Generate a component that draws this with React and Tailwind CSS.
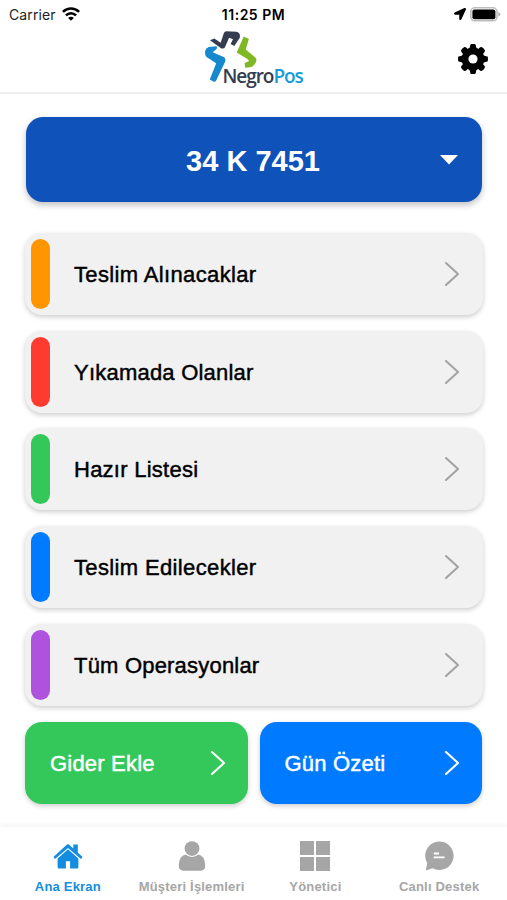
import React from 'react';
import { FaLocationArrow } from 'react-icons/fa';

const operations = [
    { title: 'Teslim Alınacaklar', color: 'bg-[#ff9500]', text: 'tracking-[0.36px]' },
    { title: 'Yıkamada Olanlar', color: 'bg-[#ff3b30]', text: 'tracking-[0.22px]' },
    { title: 'Hazır Listesi', color: 'bg-[#34c759]', text: 'tracking-[0.25px]' },
    { title: 'Teslim Edilecekler', color: 'bg-[#007aff]', text: 'tracking-[0.36px]' },
    { title: 'Tüm Operasyonlar', color: 'bg-[#af52de]', text: 'tracking-[0.2px]' },
];

const Chevron = ({ className }) => (
    <svg width="16" height="26" viewBox="0 0 16 26" fill="none" className={className}>
        <path d="M2 2 L14 13 L2 24" stroke="currentColor" strokeWidth="2.1" strokeLinecap="round" strokeLinejoin="round" />
    </svg>
);

const WifiIcon = () => (
    <svg width="18" height="14" viewBox="0 0 18 14" fill="none" stroke="#000" strokeWidth="2.6">
        <path d="M0.9 4.9 C5.6 0.4 12.4 0.4 17.1 4.9" />
        <path d="M3.9 8.4 C7 5.5 11 5.5 14.1 8.4" />
        <path d="M9 13.8 L6.2 10.9 C7.8 9.4 10.2 9.4 11.8 10.9 Z" fill="#000" stroke="none" />
    </svg>
);

const BatteryIcon = () => (
    <svg width="31" height="15" viewBox="0 0 31 15">
        <rect x="0.8" y="0.8" width="26.2" height="13" rx="4" fill="#fff" stroke="#bdbdbd" strokeWidth="1.6" />
        <rect x="2.4" y="2.4" width="23" height="9.8" rx="2" fill="#000" />
        <path d="M28.3 5 Q30.2 5.8 30.2 7.3 Q30.2 8.8 28.3 9.6 Z" fill="#b0b0b0" />
    </svg>
);

const GearIcon = () => (
    <svg width="30" height="30" viewBox="-15 -15 30 30">
        {[0, 90].map((angle) => (
            <path key={angle} d="M-2.6 -14.2 Q-2.4 -14.9 -1.6 -14.9 H1.6 Q2.4 -14.9 2.6 -14.2 L4 -9 V9 L2.6 14.2 Q2.4 14.9 1.6 14.9 H-1.6 Q-2.4 14.9 -2.6 14.2 L-4 9 V-9 Z" transform={`rotate(${angle})`} />
        ))}
        {[45, 135].map((angle) => (
            <rect key={angle} x="-3.4" y="-14.9" width="6.8" height="29.8" rx="2.6" transform={`rotate(${angle})`} />
        ))}
        <circle r="11.4" />
        <circle r="4.6" fill="#fff" />
    </svg>
);

const Logo = () => (
    <div className="relative h-[60px] w-[100px]">
        <svg width="100" height="60" viewBox="0 0 100 60">
            <path d="M6 9.3 L10.3 7.6 L16.7 11.8 L19.8 2.2 Q20.5 0.2 22.5 0.2 L32.5 0.7 Q36.8 1.8 35.8 6.8 L30.3 15 L26.6 13 L29 8.3 L25.1 6.8 L21.3 15.4 Q20.3 18.4 17 17.3 Z" fill="#343c50" />
            <path d="M39.7 5.6 L44.9 8 L41.7 18.4 L51.4 26.4 Q53.2 28.5 51.8 31.5 Q49.8 35.7 46 36.3 L41.2 36.7 L40.6 32 L45.2 30 L43.4 28 L32.7 21.5 Z" fill="#80b824" />
            <path d="M1 20.5 Q1.5 17.2 4.6 16.1 L12.2 15.2 Q14.2 16.2 12 18.6 L8.7 21.3 L20.2 26.2 Q22 27.4 21.2 30.4 L12.2 49.5 Q11.3 51.4 9.4 50.6 L5.8 48.6 L12.2 32.3 L2.5 26 Q0.8 24.4 1 20.5 Z" fill="#1688cd" />
        </svg>
        <div className="absolute left-[19px] top-[34px] whitespace-nowrap font-['Open_Sans','Noto_Sans',sans-serif] text-[19px] font-semibold leading-[22px] tracking-[-1.05px] text-[#343c50]">
            Negro<span className="text-[#159bdc]">Pos</span>
        </div>
    </div>
);

const HomeIcon = () => (
    <svg width="30" height="30" viewBox="0 0 30 30" fill="currentColor">
        <path d="M0.4 16.1 L14 3.6 Q15 2.8 16 3.6 L20.3 7.5 V3.6 H24.8 V11.5 L29.6 16.1 L28 18.1 L15 6.9 L2 18.1 Z" />
        <path d="M4.6 17.4 L15 8.2 L25.4 17.4 V26 Q25.4 27.5 23.9 27.5 H17.1 V20.3 H12.9 V27.5 H6.1 Q4.6 27.5 4.6 26 Z" />
    </svg>
);

const PersonIcon = () => (
    <svg width="28" height="30" viewBox="0 0 28 30" fill="currentColor">
        <circle cx="14" cy="7.6" r="7.4" />
        <path d="M7.5 13.6 Q14 18.5 20.5 13.6 Q26.8 14.8 27.2 24.5 Q27.2 29.7 22.5 29.7 H5.5 Q0.8 29.7 0.8 24.5 Q1.2 14.8 7.5 13.6 Z" />
    </svg>
);

const GridIcon = () => (
    <svg width="30" height="30" viewBox="0 0 30 30" fill="currentColor">
        <path d="M0 0H14V14H0ZM16 0H30V14H16ZM0 16H14V30H0ZM16 16H30V30H16Z" />
    </svg>
);

const ChatIcon = () => (
    <svg width="30" height="30" viewBox="0 0 30 30">
        <path d="M1.8 29.6 L3.2 22 A14.2 14.2 0 1 1 8.6 27.2 Z" fill="currentColor" />
        <path d="M9.8 12.5 H15 M9.8 16.3 H20.6" stroke="#fff" strokeWidth="1.8" />
    </svg>
);

const tabs = [
    { label: 'Ana Ekran', icon: <HomeIcon />, active: true },
    { label: 'Müşteri İşlemleri', icon: <PersonIcon /> },
    { label: 'Yönetici', icon: <GridIcon /> },
    { label: 'Canlı Destek', icon: <ChatIcon /> },
];

const App = () => {
    return (
        <div className="flex h-[900px] w-[507px] flex-col overflow-hidden bg-white font-['Liberation_Sans',Arial,sans-serif] text-black">
            <div className="grid h-[28px] shrink-0 grid-cols-3 items-center pl-[9px] pr-[6px] font-['Inter',sans-serif]">
                <div className="flex items-center gap-[6px] text-[14px] tracking-[0.1px] text-[#222]">
                    <span>Carrier</span>
                    <WifiIcon />
                </div>
                <div className="pr-[3px] text-center text-[14px] font-semibold tracking-[0.5px]">11:25 PM</div>
                <div className="flex items-center justify-end gap-[4px]">
                    <FaLocationArrow size={12} />
                    <BatteryIcon />
                </div>
            </div>

            <header className="grid h-[66px] shrink-0 grid-cols-[1fr_100px_1fr] items-start border-b-2 border-[#eeeeee] pt-[3px]">
                <span />
                <Logo />
                <button className="mr-[19px] mt-[13px] justify-self-end">
                    <GearIcon />
                </button>
            </header>

            <main className="flex flex-1 flex-col px-[25px] pt-[23px]">
                <button className="ml-px grid h-[85px] w-[456px] shrink-0 grid-cols-[1fr_auto_1fr] items-center rounded-[17px] bg-[#0f52ba] pr-[24px] text-white shadow-[0_3px_6px_rgba(0,0,0,0.25)]">
                    <span />
                    <span className="pl-[22px] pt-[3px] text-[29px] font-bold leading-none">34 K 7451</span>
                    <svg width="18" height="10" viewBox="0 0 18 10" className="justify-self-end">
                        <path d="M0 0H18L9 9.5Z" fill="currentColor" />
                    </svg>
                </button>

                <div className="mt-[31px] flex flex-col gap-[15.7px]">
                    {operations.map((item) => (
                        <button
                            key={item.title}
                            className="flex h-[82px] w-[458px] items-center rounded-[17px] bg-[#f1f1f1] pl-[6px] pr-[23px] text-left shadow-[0_2px_5px_rgba(0,0,0,0.2)]"
                        >
                            <span className={`h-[70px] w-[19px] rounded-full ${item.color}`} />
                            <span className={`ml-[24px] flex-1 pt-[2px] text-[22px] leading-none [-webkit-text-stroke:0.45px_black] ${item.text}`}>
                                {item.title}
                            </span>
                            <Chevron className="text-[#a3a3a3]" />
                        </button>
                    ))}
                </div>

                <div className="mt-[16px] grid w-[457px] grid-cols-2 gap-[12px] text-[22px] tracking-[0.2px] text-white [-webkit-text-stroke:0.45px_white]">
                    <button className="flex h-[82px] items-center justify-between rounded-[17px] bg-[#34c759] pl-[25px] pr-[22px] shadow-[0_2px_5px_rgba(0,0,0,0.2)]">
                        <span className="pt-[2px]">Gider Ekle</span>
                        <Chevron />
                    </button>
                    <button className="flex h-[82px] items-center justify-between rounded-[17px] bg-[#007aff] pl-[25px] pr-[22px] shadow-[0_2px_5px_rgba(0,0,0,0.2)]">
                        <span className="pt-[2px]">Gün Özeti</span>
                        <Chevron />
                    </button>
                </div>
            </main>

            <nav className="grid h-[73px] shrink-0 grid-cols-4 bg-white px-[6px] pt-[14px] shadow-[0_-3px_4px_rgba(0,0,0,0.04)]">
                {tabs.map((tab) => (
                    <div
                        key={tab.label}
                        className={`flex flex-col items-center ${tab.active ? 'text-[#148de0]' : 'text-[#a6a6a6]'}`}
                    >
                        <div className="flex h-[30px] items-center">{tab.icon}</div>
                        <span className="mt-[7px] whitespace-nowrap text-[13px] font-bold leading-[18px] tracking-[0.2px]">{tab.label}</span>
                    </div>
                ))}
            </nav>
        </div>
    );
};

export default App;
